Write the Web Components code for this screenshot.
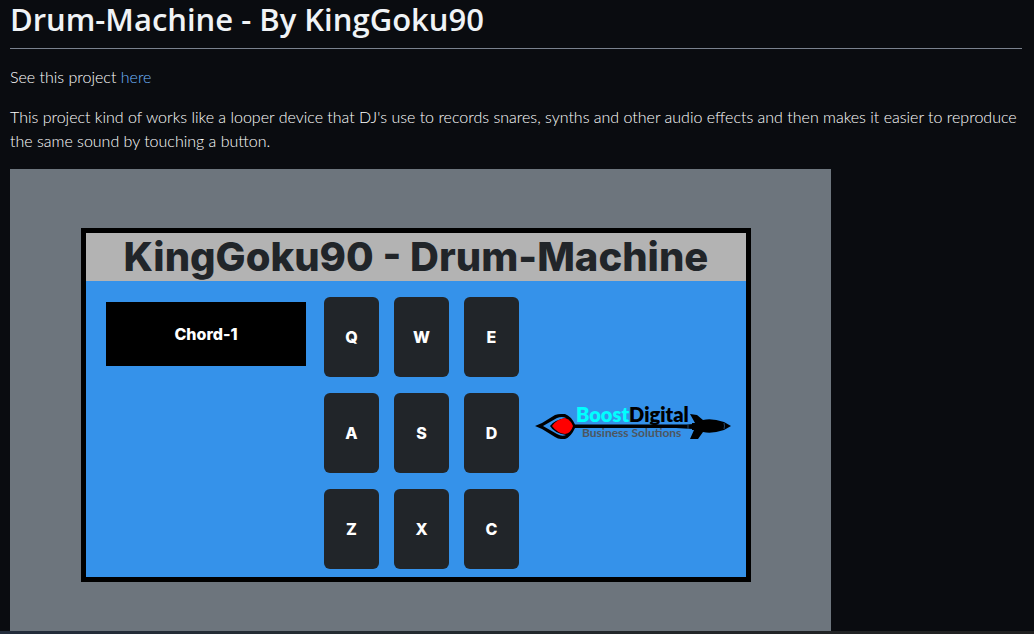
<!DOCTYPE html>
<html lang="en">
<head>
<meta charset="utf-8">
<title>Drum-Machine</title>
<style>
html { height: 100%; }
body { margin: 0; min-height: 100%; display: flex; flex-direction: column; background: #0a0c10; }
readme-page { flex: 1; }
</style>
</head>
<body>
<readme-page>
  <span slot="title">Drum-Machine - By KingGoku90</span>
  <drum-machine heading="KingGoku90 - Drum-Machine" sound="Chord-1" keys="QWEASDZXC"></drum-machine>
</readme-page>

<template id="page">
<style>
:host { display: flex; flex-direction: column; color: #fff; font: 300 16px/24px Lato, sans-serif; }
main { flex: 1; padding: 0 12px 0 10px; }
h1 { margin: 0 0 16px; padding-bottom: 10px; border-bottom: 1px solid #7a828e; color: #f0f3f6; font: 600 31px/38px "Open Sans", sans-serif; }
p { margin: 0 0 16px; }
a { color: #71b7ff; text-decoration: none; }
footer { height: 3px; background: linear-gradient(90deg, #232c3b, #242c32 30%, #202020); }
</style>
<main>
  <h1><slot name="title"></slot></h1>
  <p>See this project <a href="#demo">here</a></p>
  <p>This project kind of works like a looper device that DJ's use to records snares, synths and other audio effects and then makes it easier to reproduce the same sound by touching a button.</p>
  <slot></slot>
</main>
<footer></footer>
</template>

<template id="machine">
<style>
:host { display: block; box-sizing: border-box; max-width: 821px; padding: 59px 80px 49px 71px; background: #6d757d; font: 800 16px/24px Inter, sans-serif; }
section { border: 5px solid #000; background: #3592ea; }
h2 { margin: 0; background: #b3b3b3; color: #212529; text-align: center; font-size: 40px; font-weight: 800; line-height: 48px; }
.panel { display: grid; grid-template-columns: 200px auto 1fr; gap: 18px; padding: 16px 15px 8px 20px; }
output { display: block; margin-top: 5px; align-self: start; padding: 20px 0; background: #000; color: #fff; text-align: center; }
.pads { display: grid; grid-template-columns: repeat(3, 55px); grid-auto-rows: 80px; gap: 16px 15px; }
boost-logo { align-self: center; }
</style>
<section>
  <h2></h2>
  <div class="panel">
    <output></output>
    <div class="pads"></div>
    <boost-logo></boost-logo>
  </div>
</section>
</template>

<template id="pad">
<style>
:host { display: grid; }
button { border: 0; padding: 0; border-radius: 6px; background: #212529; color: #fff; font: inherit; }
</style>
<button type="button"><slot></slot></button>
</template>

<template id="logo">
<style>
:host { display: block; }
svg { display: block; overflow: visible; }
text { font-family: Lato, sans-serif; }
.name { font-size: 20px; font-weight: 800; }
.tag { font-size: 12px; font-weight: 700; fill: #4d5660; }
</style>
<svg width="194" height="60" viewBox="0 0 194 60" role="img" aria-label="BoostDigital Business Solutions">
  <path d="M-2 23L5 20L18 12Q21 11 24 11H28Q34 13 38 21.5H150L156 21V26L139 25H38Q34 34 28 36H24Q21 36 18 34L5 26Z"/>
  <path fill="#3592ea" d="M6 23L20 15Q25 13 29 15Q17 17 13 23Q17 30 29 32Q25 34 20 31Z"/>
  <path fill="#f00" d="M15 23Q20 16 28 15Q34 17 36 23Q34 30 28 31Q20 30 15 23Z"/>
  <path d="M153 11L160 12L166 17Q175 15 187 19L194 23L187 27Q175 31 166 29L161 36H153L157 27H155V20H158Z"/>
  <path fill="none" stroke="#24496d" d="M187 20Q188 23 187 26M151 21V26"/>
  <text class="name" x="39" y="19"><tspan fill="#0ff">Boost</tspan><tspan>Digital</tspan></text>
  <text class="tag" x="45" y="34">Business Solutions</text>
</svg>
</template>

<script>
const mount = (host, id) => {
  const root = host.attachShadow({ mode: 'open' });
  root.append(document.getElementById(id).content.cloneNode(true));
  return root;
};
customElements.define('boost-logo', class extends HTMLElement {
  constructor() { super(); mount(this, 'logo'); }
});
customElements.define('drum-pad', class extends HTMLElement {
  constructor() { super(); mount(this, 'pad'); }
});
customElements.define('drum-machine', class extends HTMLElement {
  connectedCallback() {
    const root = mount(this, 'machine');
    root.querySelector('h2').textContent = this.getAttribute('heading');
    root.querySelector('output').textContent = this.getAttribute('sound');
    for (const key of this.getAttribute('keys')) {
      const pad = document.createElement('drum-pad');
      pad.textContent = key;
      root.querySelector('.pads').append(pad);
    }
  }
});
customElements.define('readme-page', class extends HTMLElement {
  constructor() { super(); mount(this, 'page'); }
});
</script>
</body>
</html>
